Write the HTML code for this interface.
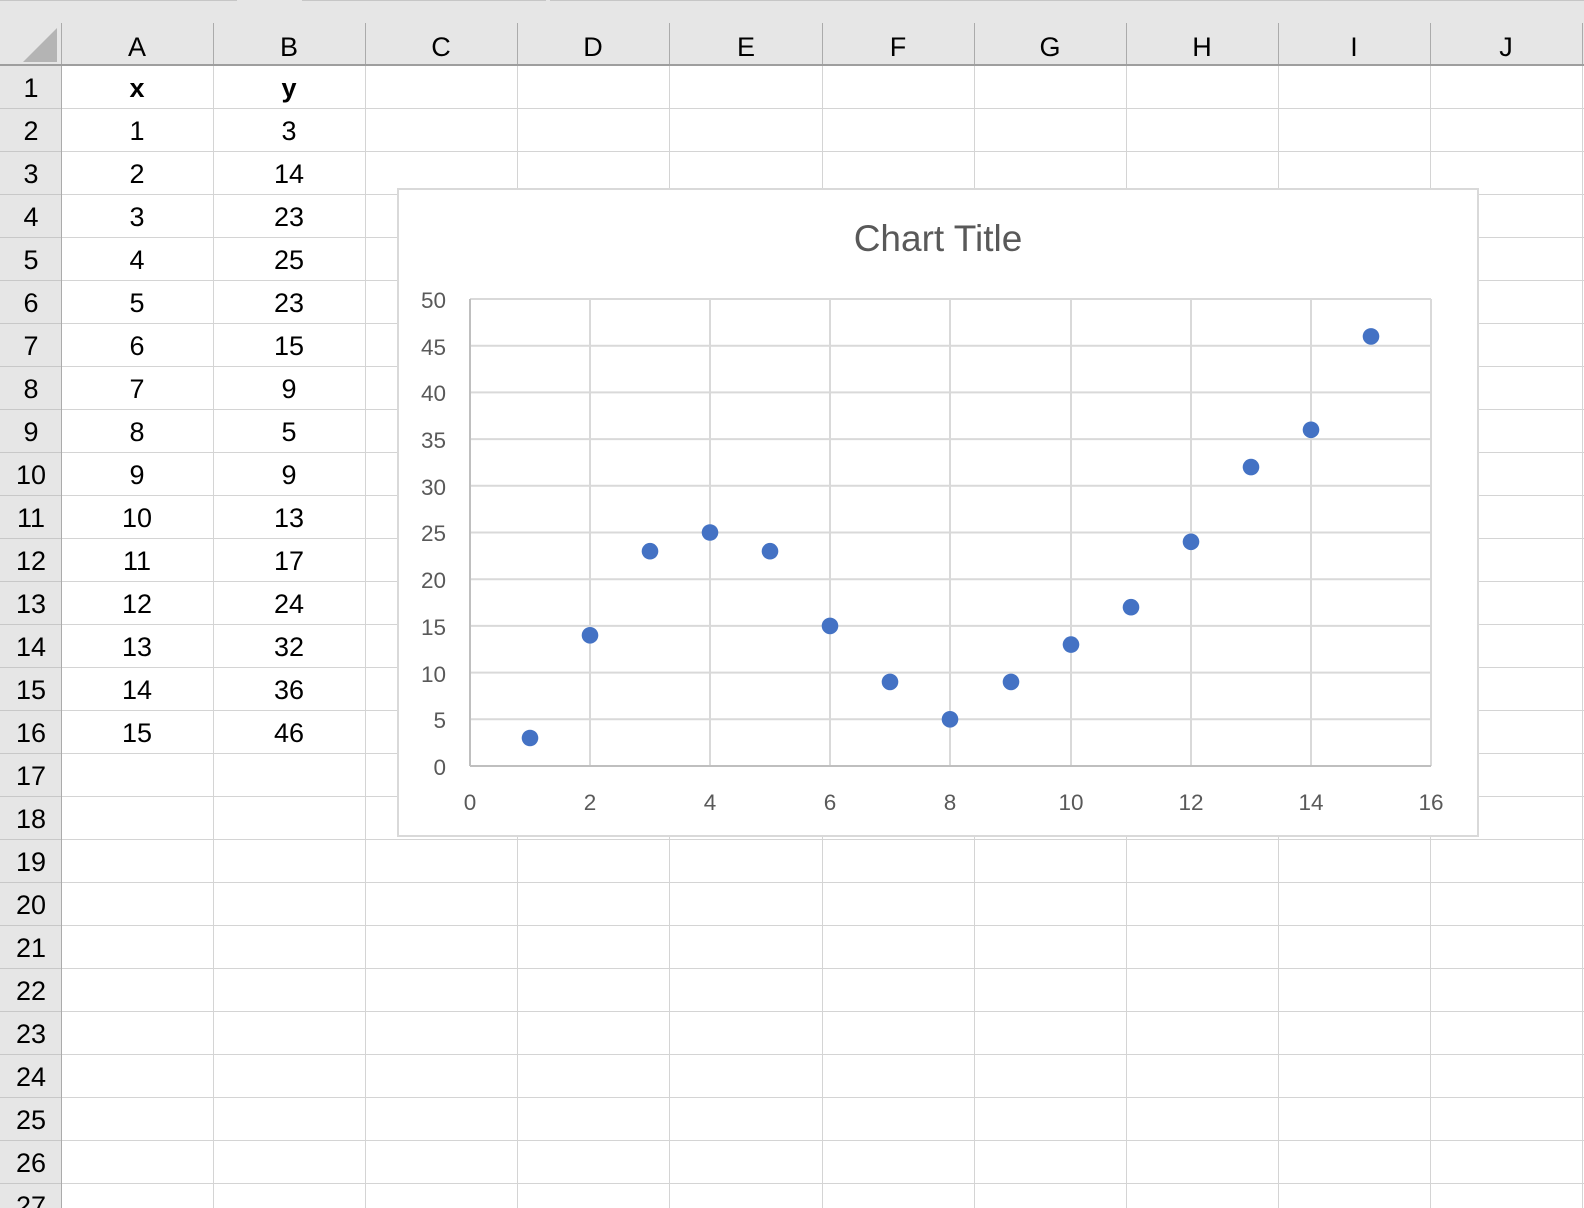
<!DOCTYPE html>
<html><head><meta charset="utf-8"><style>
html,body{margin:0;padding:0;background:#fff;overflow:hidden}
svg{display:block}
</style></head><body>
<svg width="1584" height="1208" xmlns="http://www.w3.org/2000/svg" font-family="Liberation Sans, sans-serif">
<rect x="0" y="0" width="1584" height="65" fill="#e6e6e6"/>
<rect x="0" y="65" width="61" height="1143" fill="#e6e6e6"/>
<line x1="0" y1="0.5" x2="237" y2="0.5" stroke="#c6c6c6"/>
<line x1="302" y1="0.5" x2="546" y2="0.5" stroke="#c6c6c6"/>
<line x1="550" y1="0.5" x2="1584" y2="0.5" stroke="#c6c6c6"/>
<polygon points="23,62 57,28 57,62" fill="#b4b4b4"/>
<g stroke="#d4d4d4" stroke-width="1">
<line x1="213.5" y1="65" x2="213.5" y2="1208"/><line x1="365.5" y1="65" x2="365.5" y2="1208"/>
<line x1="517.5" y1="65" x2="517.5" y2="1208"/><line x1="669.5" y1="65" x2="669.5" y2="1208"/>
<line x1="822.5" y1="65" x2="822.5" y2="1208"/><line x1="974.5" y1="65" x2="974.5" y2="1208"/>
<line x1="1126.5" y1="65" x2="1126.5" y2="1208"/><line x1="1278.5" y1="65" x2="1278.5" y2="1208"/>
<line x1="1430.5" y1="65" x2="1430.5" y2="1208"/><line x1="1582.5" y1="65" x2="1582.5" y2="1208"/>
</g>
<g stroke="#d4d4d4" stroke-width="1">
<line x1="61" y1="108.5" x2="1584" y2="108.5"/><line x1="61" y1="151.5" x2="1584" y2="151.5"/>
<line x1="61" y1="194.5" x2="1584" y2="194.5"/><line x1="61" y1="237.5" x2="1584" y2="237.5"/>
<line x1="61" y1="280.5" x2="1584" y2="280.5"/><line x1="61" y1="323.5" x2="1584" y2="323.5"/>
<line x1="61" y1="366.5" x2="1584" y2="366.5"/><line x1="61" y1="409.5" x2="1584" y2="409.5"/>
<line x1="61" y1="452.5" x2="1584" y2="452.5"/><line x1="61" y1="495.5" x2="1584" y2="495.5"/>
<line x1="61" y1="538.5" x2="1584" y2="538.5"/><line x1="61" y1="581.5" x2="1584" y2="581.5"/>
<line x1="61" y1="624.5" x2="1584" y2="624.5"/><line x1="61" y1="667.5" x2="1584" y2="667.5"/>
<line x1="61" y1="710.5" x2="1584" y2="710.5"/><line x1="61" y1="753.5" x2="1584" y2="753.5"/>
<line x1="61" y1="796.5" x2="1584" y2="796.5"/><line x1="61" y1="839.5" x2="1584" y2="839.5"/>
<line x1="61" y1="882.5" x2="1584" y2="882.5"/><line x1="61" y1="925.5" x2="1584" y2="925.5"/>
<line x1="61" y1="968.5" x2="1584" y2="968.5"/><line x1="61" y1="1011.5" x2="1584" y2="1011.5"/>
<line x1="61" y1="1054.5" x2="1584" y2="1054.5"/><line x1="61" y1="1097.5" x2="1584" y2="1097.5"/>
<line x1="61" y1="1140.5" x2="1584" y2="1140.5"/><line x1="61" y1="1183.5" x2="1584" y2="1183.5"/>
</g>
<g stroke="#c8c8c8" stroke-width="1">
<line x1="0" y1="108.5" x2="61" y2="108.5"/><line x1="0" y1="151.5" x2="61" y2="151.5"/>
<line x1="0" y1="194.5" x2="61" y2="194.5"/><line x1="0" y1="237.5" x2="61" y2="237.5"/>
<line x1="0" y1="280.5" x2="61" y2="280.5"/><line x1="0" y1="323.5" x2="61" y2="323.5"/>
<line x1="0" y1="366.5" x2="61" y2="366.5"/><line x1="0" y1="409.5" x2="61" y2="409.5"/>
<line x1="0" y1="452.5" x2="61" y2="452.5"/><line x1="0" y1="495.5" x2="61" y2="495.5"/>
<line x1="0" y1="538.5" x2="61" y2="538.5"/><line x1="0" y1="581.5" x2="61" y2="581.5"/>
<line x1="0" y1="624.5" x2="61" y2="624.5"/><line x1="0" y1="667.5" x2="61" y2="667.5"/>
<line x1="0" y1="710.5" x2="61" y2="710.5"/><line x1="0" y1="753.5" x2="61" y2="753.5"/>
<line x1="0" y1="796.5" x2="61" y2="796.5"/><line x1="0" y1="839.5" x2="61" y2="839.5"/>
<line x1="0" y1="882.5" x2="61" y2="882.5"/><line x1="0" y1="925.5" x2="61" y2="925.5"/>
<line x1="0" y1="968.5" x2="61" y2="968.5"/><line x1="0" y1="1011.5" x2="61" y2="1011.5"/>
<line x1="0" y1="1054.5" x2="61" y2="1054.5"/><line x1="0" y1="1097.5" x2="61" y2="1097.5"/>
<line x1="0" y1="1140.5" x2="61" y2="1140.5"/><line x1="0" y1="1183.5" x2="61" y2="1183.5"/>
</g>
<g stroke="#ababab" stroke-width="1">
<line x1="213.5" y1="23" x2="213.5" y2="65"/><line x1="365.5" y1="23" x2="365.5" y2="65"/>
<line x1="517.5" y1="23" x2="517.5" y2="65"/><line x1="669.5" y1="23" x2="669.5" y2="65"/>
<line x1="822.5" y1="23" x2="822.5" y2="65"/><line x1="974.5" y1="23" x2="974.5" y2="65"/>
<line x1="1126.5" y1="23" x2="1126.5" y2="65"/><line x1="1278.5" y1="23" x2="1278.5" y2="65"/>
<line x1="1430.5" y1="23" x2="1430.5" y2="65"/><line x1="1582.5" y1="23" x2="1582.5" y2="65"/>
<line x1="61.5" y1="23" x2="61.5" y2="1208"/>
</g>
<line x1="0" y1="65" x2="1584" y2="65" stroke="#9e9e9e" stroke-width="2"/>
<g font-size="27" fill="#000" text-anchor="middle">
<text x="137" y="56">A</text><text x="289" y="56">B</text><text x="441" y="56">C</text><text x="593" y="56">D</text><text x="746" y="56">E</text><text x="898" y="56">F</text><text x="1050" y="56">G</text><text x="1202" y="56">H</text><text x="1354" y="56">I</text><text x="1506" y="56">J</text>
</g>
<g font-size="27" fill="#000" text-anchor="middle">
<text x="31" y="97">1</text><text x="31" y="140">2</text><text x="31" y="183">3</text><text x="31" y="226">4</text><text x="31" y="269">5</text><text x="31" y="312">6</text><text x="31" y="355">7</text><text x="31" y="398">8</text><text x="31" y="441">9</text><text x="31" y="484">10</text><text x="31" y="527">11</text><text x="31" y="570">12</text><text x="31" y="613">13</text><text x="31" y="656">14</text><text x="31" y="699">15</text><text x="31" y="742">16</text><text x="31" y="785">17</text><text x="31" y="828">18</text><text x="31" y="871">19</text><text x="31" y="914">20</text><text x="31" y="957">21</text><text x="31" y="1000">22</text><text x="31" y="1043">23</text><text x="31" y="1086">24</text><text x="31" y="1129">25</text><text x="31" y="1172">26</text><text x="31" y="1215">27</text>
</g>
<g font-size="27" fill="#000" text-anchor="middle">
<text x="137" y="97" font-weight="bold">x</text><text x="289" y="97" font-weight="bold">y</text>
<text x="137" y="140">1</text><text x="289" y="140">3</text>
<text x="137" y="183">2</text><text x="289" y="183">14</text>
<text x="137" y="226">3</text><text x="289" y="226">23</text>
<text x="137" y="269">4</text><text x="289" y="269">25</text>
<text x="137" y="312">5</text><text x="289" y="312">23</text>
<text x="137" y="355">6</text><text x="289" y="355">15</text>
<text x="137" y="398">7</text><text x="289" y="398">9</text>
<text x="137" y="441">8</text><text x="289" y="441">5</text>
<text x="137" y="484">9</text><text x="289" y="484">9</text>
<text x="137" y="527">10</text><text x="289" y="527">13</text>
<text x="137" y="570">11</text><text x="289" y="570">17</text>
<text x="137" y="613">12</text><text x="289" y="613">24</text>
<text x="137" y="656">13</text><text x="289" y="656">32</text>
<text x="137" y="699">14</text><text x="289" y="699">36</text>
<text x="137" y="742">15</text><text x="289" y="742">46</text>
</g>
<rect x="398" y="189" width="1080" height="647" fill="#fff" stroke="#d9d9d9" stroke-width="2"/>
<text x="938" y="251" font-size="37" fill="#595959" text-anchor="middle">Chart Title</text>
<g stroke="#d9d9d9" stroke-width="2">
<line x1="470" y1="299" x2="1431" y2="299"/><line x1="470" y1="345.7" x2="1431" y2="345.7"/>
<line x1="470" y1="392.4" x2="1431" y2="392.4"/><line x1="470" y1="439.1" x2="1431" y2="439.1"/>
<line x1="470" y1="485.8" x2="1431" y2="485.8"/><line x1="470" y1="532.5" x2="1431" y2="532.5"/>
<line x1="470" y1="579.2" x2="1431" y2="579.2"/><line x1="470" y1="625.9" x2="1431" y2="625.9"/>
<line x1="470" y1="672.6" x2="1431" y2="672.6"/><line x1="470" y1="719.3" x2="1431" y2="719.3"/>
<line x1="590" y1="299" x2="590" y2="766"/><line x1="710" y1="299" x2="710" y2="766"/>
<line x1="830" y1="299" x2="830" y2="766"/><line x1="950" y1="299" x2="950" y2="766"/>
<line x1="1071" y1="299" x2="1071" y2="766"/><line x1="1191" y1="299" x2="1191" y2="766"/>
<line x1="1311" y1="299" x2="1311" y2="766"/><line x1="1431" y1="299" x2="1431" y2="766"/>
</g>
<g stroke="#bfbfbf" stroke-width="2">
<line x1="470" y1="299" x2="470" y2="766"/><line x1="470" y1="766" x2="1431" y2="766"/>
</g>
<g font-size="22.5" fill="#595959" text-anchor="end">
<text x="446" y="308">50</text><text x="446" y="355">45</text><text x="446" y="401">40</text><text x="446" y="448">35</text><text x="446" y="495">30</text><text x="446" y="541">25</text><text x="446" y="588">20</text><text x="446" y="635">15</text><text x="446" y="682">10</text><text x="446" y="728">5</text><text x="446" y="775">0</text>
</g>
<g font-size="22.5" fill="#595959" text-anchor="middle">
<text x="470" y="810">0</text><text x="590" y="810">2</text><text x="710" y="810">4</text><text x="830" y="810">6</text><text x="950" y="810">8</text><text x="1071" y="810">10</text><text x="1191" y="810">12</text><text x="1311" y="810">14</text><text x="1431" y="810">16</text>
</g>
<g fill="#4472c4">
<circle cx="530" cy="738" r="8.3"/><circle cx="590" cy="635.3" r="8.3"/><circle cx="650" cy="551.2" r="8.3"/>
<circle cx="710" cy="532.5" r="8.3"/><circle cx="770" cy="551.2" r="8.3"/><circle cx="830" cy="625.9" r="8.3"/>
<circle cx="890" cy="681.9" r="8.3"/><circle cx="950" cy="719.3" r="8.3"/><circle cx="1011" cy="681.9" r="8.3"/>
<circle cx="1071" cy="644.6" r="8.3"/><circle cx="1131" cy="607.2" r="8.3"/><circle cx="1191" cy="541.8" r="8.3"/>
<circle cx="1251" cy="467.1" r="8.3"/><circle cx="1311" cy="429.8" r="8.3"/><circle cx="1371" cy="336.4" r="8.3"/>
</g>
</svg>
</body></html>
